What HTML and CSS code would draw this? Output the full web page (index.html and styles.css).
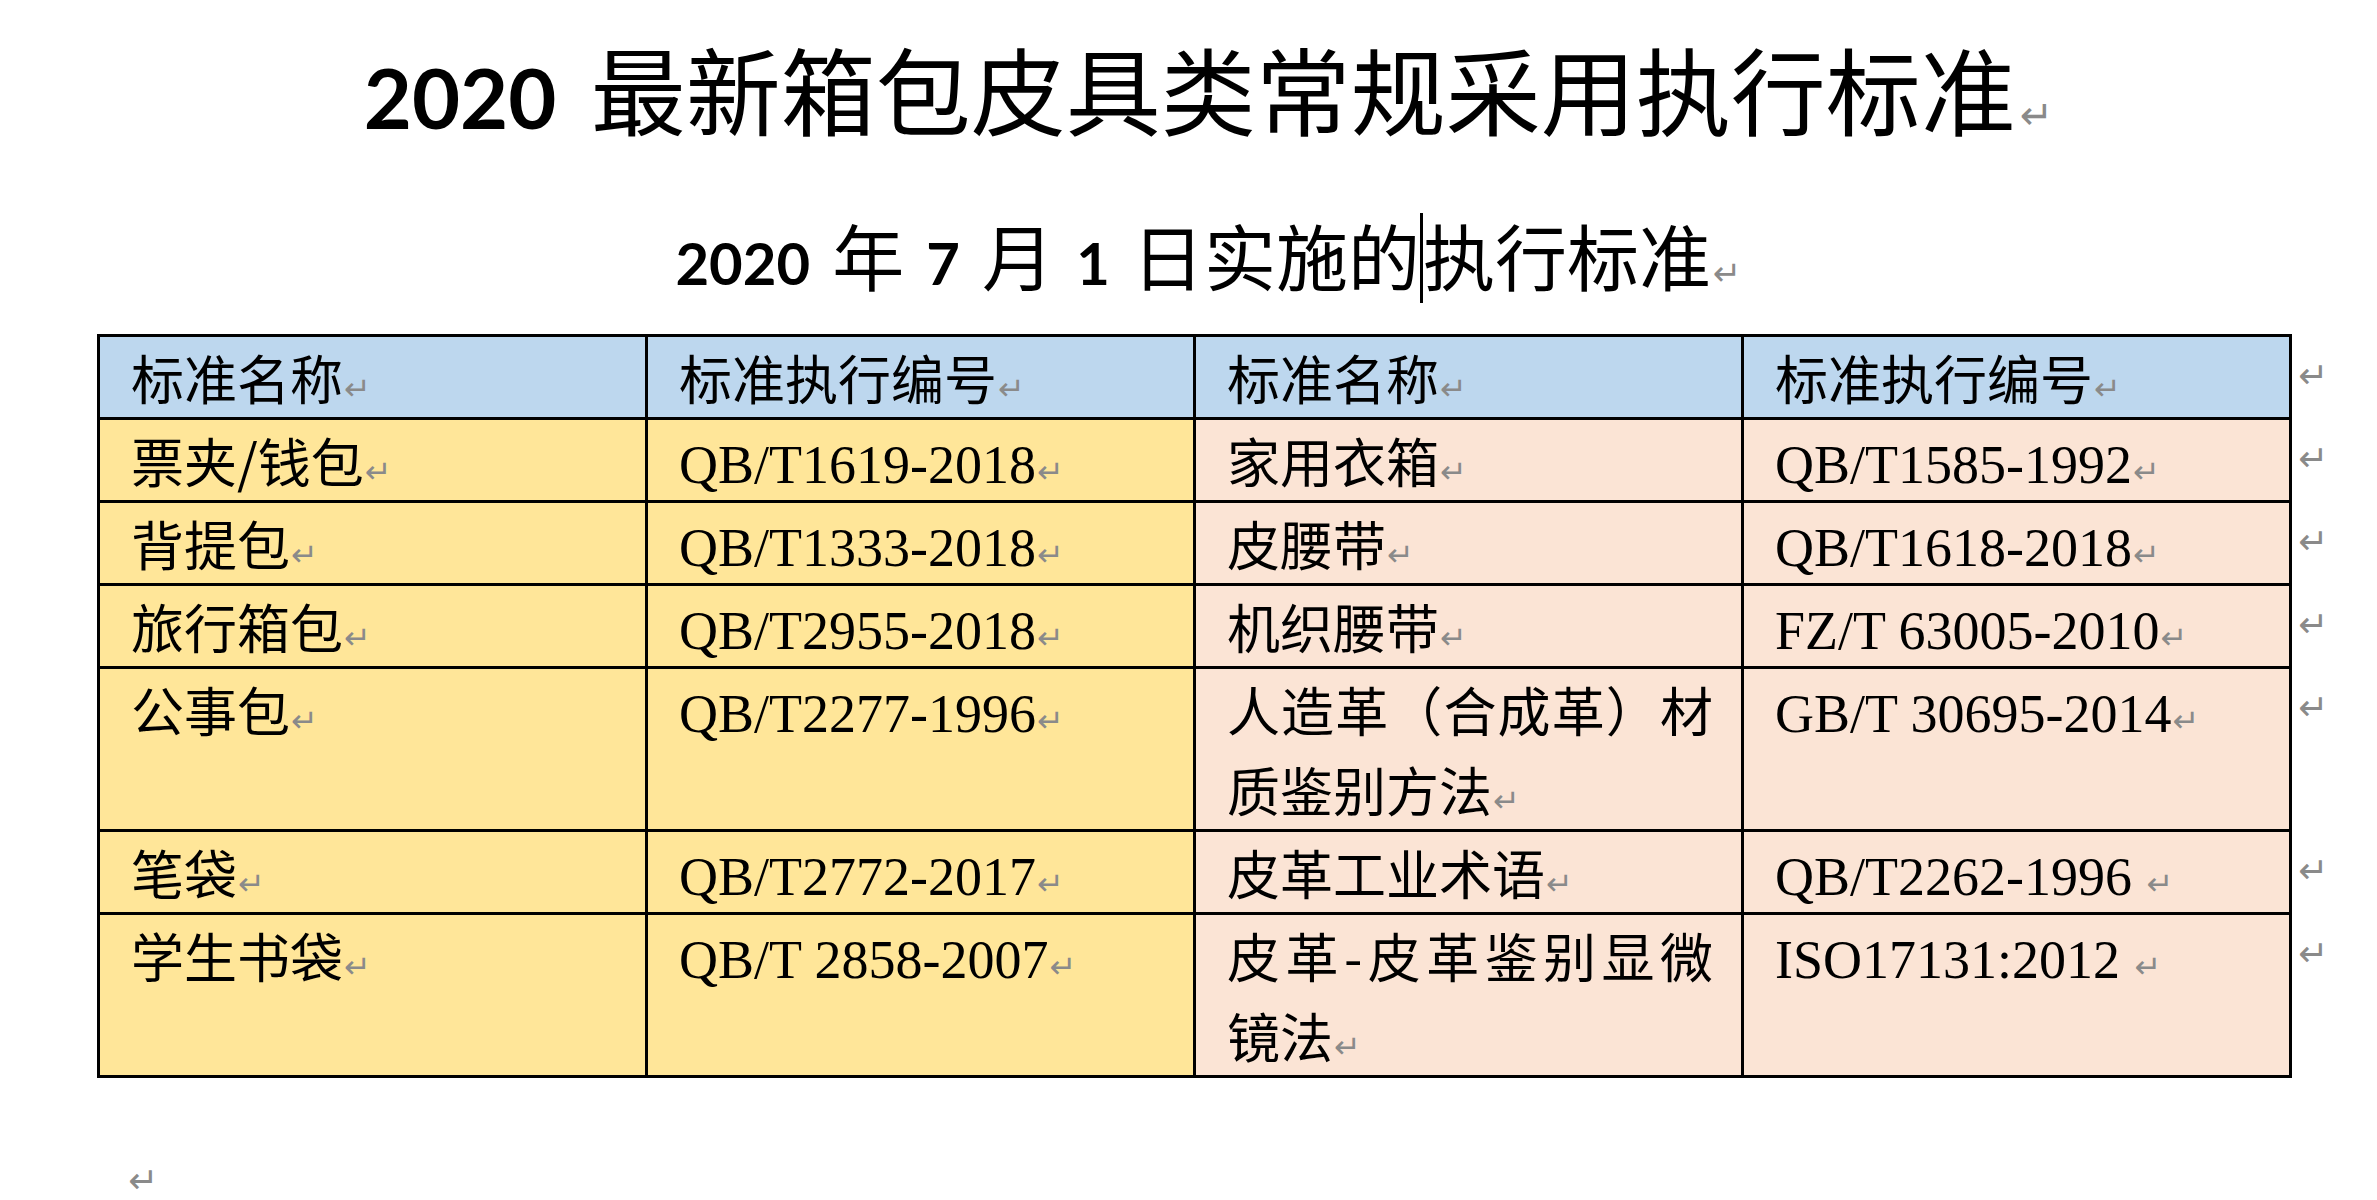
FILE: index.html
```html
<!DOCTYPE html>
<html lang="zh-CN">
<head>
<meta charset="utf-8">
<title>2020 最新箱包皮具类常规采用执行标准</title>
<link rel="stylesheet" href="styles.css">
</head>
<body>
<div class="page">
  <h1 class="title"><span class="num">2020</span> 最新箱包皮具类常规采用执行标准<span class="pm">↵</span></h1>
  <h2 class="subtitle"><span class="num">2020</span> 年 <span class="num">7</span> 月 <span class="num">1</span> 日实施的<span class="caret"></span>执行标准<span class="pm">↵</span></h2>
  <table class="std">
    <colgroup>
      <col class="c"><col class="c"><col class="c"><col class="c"><col class="e">
    </colgroup>
    <tr class="head">
      <th>标准名称<span class="pm">↵</span></th>
      <th>标准执行编号<span class="pm">↵</span></th>
      <th>标准名称<span class="pm">↵</span></th>
      <th>标准执行编号<span class="pm">↵</span></th>
      <td class="end">↵</td>
    </tr>
    <tr>
      <td class="g">票夹/钱包<span class="pm">↵</span></td>
      <td class="g"><span class="code">QB/T1619-2018</span><span class="pm">↵</span></td>
      <td class="p">家用衣箱<span class="pm">↵</span></td>
      <td class="p"><span class="code">QB/T1585-1992</span><span class="pm">↵</span></td>
      <td class="end">↵</td>
    </tr>
    <tr>
      <td class="g">背提包<span class="pm">↵</span></td>
      <td class="g"><span class="code">QB/T1333-2018</span><span class="pm">↵</span></td>
      <td class="p">皮腰带<span class="pm">↵</span></td>
      <td class="p"><span class="code">QB/T1618-2018</span><span class="pm">↵</span></td>
      <td class="end">↵</td>
    </tr>
    <tr>
      <td class="g">旅行箱包<span class="pm">↵</span></td>
      <td class="g"><span class="code">QB/T2955-2018</span><span class="pm">↵</span></td>
      <td class="p">机织腰带<span class="pm">↵</span></td>
      <td class="p"><span class="code">FZ/T 63005-2010</span><span class="pm">↵</span></td>
      <td class="end">↵</td>
    </tr>
    <tr>
      <td class="g">公事包<span class="pm">↵</span></td>
      <td class="g"><span class="code">QB/T2277-1996</span><span class="pm">↵</span></td>
      <td class="p">人造革（合成革）材质鉴别方法<span class="pm">↵</span></td>
      <td class="p"><span class="code">GB/T 30695-2014</span><span class="pm">↵</span></td>
      <td class="end">↵</td>
    </tr>
    <tr>
      <td class="g">笔袋<span class="pm">↵</span></td>
      <td class="g"><span class="code">QB/T2772-2017</span><span class="pm">↵</span></td>
      <td class="p">皮革工业术语<span class="pm">↵</span></td>
      <td class="p"><span class="code">QB/T2262-1996 </span><span class="pm">↵</span></td>
      <td class="end">↵</td>
    </tr>
    <tr>
      <td class="g">学生书袋<span class="pm">↵</span></td>
      <td class="g"><span class="code">QB/T 2858-2007</span><span class="pm">↵</span></td>
      <td class="p">皮革-皮革鉴别显微镜法<span class="pm">↵</span></td>
      <td class="p"><span class="code">ISO17131:2012 </span><span class="pm">↵</span></td>
      <td class="end">↵</td>
    </tr>
  </table>
  <div class="endmark">↵</div>
</div>
</body>
</html>
```

FILE: styles.css
```css
body {
  margin: 0;
  background: #ffffff;
  color: #000000;
  font-family: "Noto Sans CJK SC", sans-serif;
}

.page {
  margin-left: 97px;
  width: 2223px;
}

.title {
  margin: 0;
  padding-top: 28px;
  font-size: 95px;
  line-height: 120px;
  font-weight: 400;
  text-align: center;
  word-spacing: 13px;
}

.num {
  font-family: Lato, "Noto Sans", sans-serif;
  font-weight: 700;
  line-height: 1;
}

.title .num {
  font-size: 83px;
}

.subtitle {
  margin: 56px 0 0;
  font-size: 72px;
  line-height: 100px;
  font-weight: 400;
  text-align: center;
  word-spacing: 6px;
}

.subtitle .num {
  font-size: 58px;
}

.caret {
  display: inline-block;
  width: 3px;
  height: 90px;
  background: #000000;
  vertical-align: -18px;
}

.pm {
  font-family: "DejaVu Sans", sans-serif;
  font-weight: 400;
  color: #8a8a8a;
  word-spacing: 0;
  line-height: 0;
}

.title .pm {
  font-size: 40px;
  margin-left: 4px;
}

.subtitle .pm {
  font-size: 34px;
  margin-left: 2px;
}

.std {
  margin-top: 30px;
  border-collapse: collapse;
  table-layout: fixed;
  width: 2232px;
}

.std col.c {
  width: 548px;
}

.std col.e {
  width: 40px;
}

.std th,
.std td {
  border: 3px solid #000000;
  padding: 0 28px 0 31px;
  font-size: 53px;
  line-height: 80px;
  font-weight: 400;
  text-align: justify;
  vertical-align: top;
}

.std .head th {
  background: #bdd7ee;
}

.std .g {
  background: #ffe699;
}

.std .p {
  background: #fbe4d5;
}

.std .code {
  font-family: "Liberation Serif", serif;
  font-size: 54px;
  line-height: 1;
}

.std .pm {
  font-size: 32px;
  margin-left: 1px;
}

.std td.end {
  border: none;
  background: none;
  padding: 0 0 0 6px;
  font-family: "DejaVu Sans", sans-serif;
  font-size: 36px;
  color: #8a8a8a;
}

.endmark {
  margin-top: 83px;
  padding-left: 31px;
  font-family: "DejaVu Sans", sans-serif;
  font-size: 36px;
  line-height: 40px;
  color: #8a8a8a;
}
```
